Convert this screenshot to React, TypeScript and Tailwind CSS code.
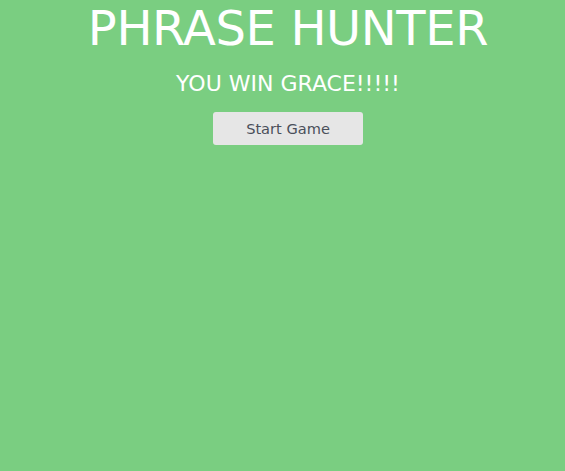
export default function App() {
  return (
    <div className="min-h-[471px] w-full bg-[#7ace81] flex flex-col items-center pl-[11px]" style={{ fontFamily: '"DejaVu Sans", sans-serif' }}>
      <h1 className="text-white text-[48px] leading-[56px] font-normal mt-0 tracking-[-0.4px]">PHRASE HUNTER</h1>
      <h2 className="text-white text-[22px] leading-[28px] font-normal mt-[14px]">YOU WIN GRACE!!!!!</h2>
      <button className="mt-[14px] w-[150px] h-[33px] bg-[#e6e6e6] rounded-[3px] text-[#4a4f5a] text-[14.6px]">Start Game</button>
    </div>
  );
}
